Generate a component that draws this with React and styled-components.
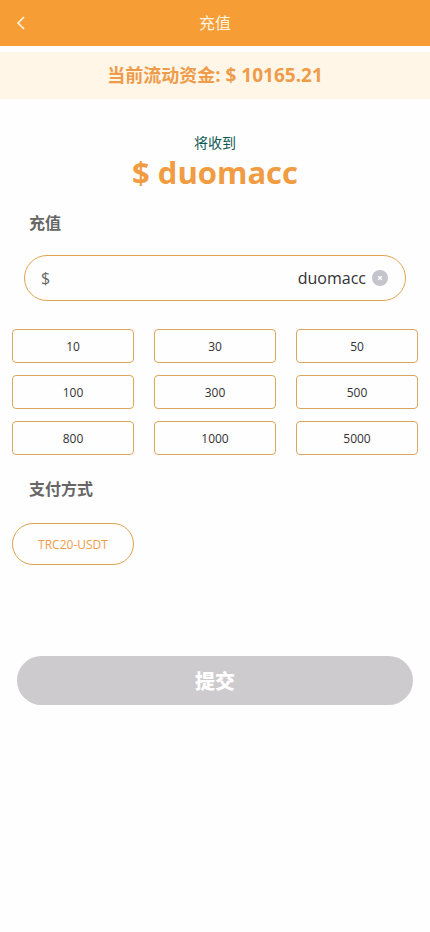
import React, { useState } from 'react';
import styled, { createGlobalStyle } from 'styled-components';

const AMOUNTS = [10, 30, 50, 100, 300, 500, 800, 1000, 5000];
const METHODS = ['TRC20-USDT'];

const App = () => {
  const [amount, setAmount] = useState('duomacc');

  return (
    <>
      <GlobalStyle />
      <Header>
        <BackButton type="button" aria-label="返回">
          <svg width="10" height="14" viewBox="0 0 10 14" fill="none">
            <path d="M8 1L2 7l6 6" stroke="currentColor" strokeWidth="1.6" />
          </svg>
        </BackButton>
        <Title>充值</Title>
      </Header>
      <Balance>
        当前流动资金<BalanceValue>: $ 10165.21</BalanceValue>
      </Balance>

      <main>
        <Receive>
          <ReceiveLabel>将收到</ReceiveLabel>
          <ReceiveAmount>$ {amount}</ReceiveAmount>
        </Receive>

        <SectionTitle as="label" htmlFor="amount">
          充值
        </SectionTitle>
        <AmountField>
          <Currency>$</Currency>
          <AmountInput
            id="amount"
            type="text"
            value={amount}
            onChange={(e) => setAmount(e.target.value)}
          />
          <ClearButton
            type="button"
            aria-label="清除"
            onClick={() => setAmount('')}
          >
            <svg width="16" height="16" viewBox="0 0 16 16">
              <circle cx="8" cy="8" r="8" fill="#c4c4cc" />
              <path
                d="M6.2 6.2l3.6 3.6M9.8 6.2L6.2 9.8"
                stroke="#fff"
                strokeWidth="1.5"
              />
            </svg>
          </ClearButton>
        </AmountField>

        <Grid>
          {AMOUNTS.map((value) => (
            <AmountButton
              key={value}
              type="button"
              onClick={() => setAmount(String(value))}
            >
              {value}
            </AmountButton>
          ))}
        </Grid>

        <SectionTitle $spacing="22px">支付方式</SectionTitle>
        <Grid>
          {METHODS.map((method) => (
            <MethodButton key={method} type="button">
              {method}
            </MethodButton>
          ))}
        </Grid>

        <SubmitButton type="button">提交</SubmitButton>
      </main>
    </>
  );
};

export default App;

const GlobalStyle = createGlobalStyle`
  * {
    box-sizing: border-box;
  }

  body {
    margin: 0;
    background-color: #fefefe;
    color: #323233;
    font-family: 'Open Sans', 'Noto Sans CJK SC', sans-serif;
  }

  button,
  input {
    margin: 0;
    padding: 0;
    border: none;
    background: none;
    color: inherit;
    font-family: inherit;
  }

  button {
    cursor: pointer;
  }

  svg {
    display: block;
  }
`;

const Header = styled.header`
  display: grid;
  grid-template-columns: 48px 1fr 48px;
  align-items: center;
  height: 46px;
  background-color: #f79d35;
  color: #fff4e0;
`;

const BackButton = styled.button`
  display: flex;
  align-items: center;
  height: 46px;
  padding-left: 16px;
`;

const Title = styled.h1`
  margin: 0;
  font-size: 16px;
  font-weight: 400;
  line-height: 24px;
  text-align: center;
`;

const Balance = styled.div`
  margin-top: 6px;
  background-color: #fff6e7;
  color: #ee9c4a;
  font-size: 18px;
  font-weight: 700;
  line-height: 47px;
  text-align: center;
`;

const BalanceValue = styled.span`
  font-size: 19px;
`;

const Receive = styled.div`
  padding: 34px 0 4px;
  text-align: center;
`;

const ReceiveLabel = styled.div`
  color: #0f5a55;
  font-size: 14px;
  line-height: 20px;
`;

const ReceiveAmount = styled.div`
  color: #f09c42;
  font-size: 31px;
  font-weight: 700;
  line-height: 38px;
`;

const SectionTitle = styled.h2`
  display: block;
  margin: 0;
  padding: ${({ $spacing }) => $spacing || '16px'} 29px
    ${({ $spacing }) => $spacing || '20px'};
  color: #666;
  font-size: 16px;
  font-weight: 700;
  line-height: 24px;
`;

const AmountField = styled.div`
  display: flex;
  align-items: center;
  gap: 6px;
  height: 46px;
  margin: 0 24px 28px;
  padding: 0 17px 0 16px;
  border: 1px solid #e0a350;
  border-radius: 23px;
`;

const Currency = styled.span`
  color: #666;
  font-size: 16px;
`;

const AmountInput = styled.input`
  flex: 1;
  min-width: 0;
  font-size: 16px;
  line-height: 24px;
  text-align: right;
  outline: none;
`;

const ClearButton = styled.button`
  flex: none;
`;

const Grid = styled.div`
  display: grid;
  grid-template-columns: repeat(3, 1fr);
  gap: 12px 20px;
  padding: 0 12px;
`;

const AmountButton = styled.button`
  height: 34px;
  border: 1px solid #dba65e;
  border-radius: 4px;
  font-size: 12px;
`;

const MethodButton = styled.button`
  height: 42px;
  border: 1px solid #e0a350;
  border-radius: 21px;
  color: #ee9c4a;
  font-size: 12px;
`;

const SubmitButton = styled.button`
  display: block;
  width: calc(100% - 34px);
  height: 49px;
  margin: 91px auto 0;
  border-radius: 25px;
  background-color: #cdcbcd;
  color: #fff;
  font-size: 20px;
  font-weight: 900;
`;
